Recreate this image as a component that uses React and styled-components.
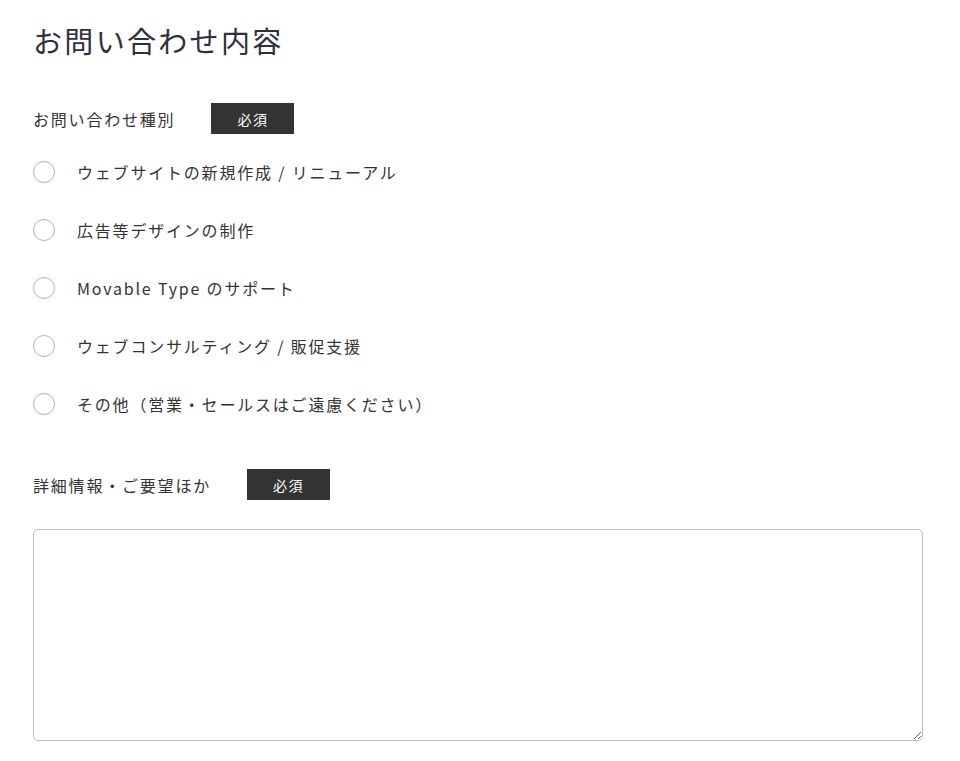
import React, { useState } from 'react';
import styled, { createGlobalStyle } from 'styled-components';

const options = [
  'ウェブサイトの新規作成 / リニューアル',
  '広告等デザインの制作',
  'Movable Type のサポート',
  'ウェブコンサルティング / 販促支援',
  'その他（営業・セールスはご遠慮ください）',
];

const App = () => {
  const [kind, setKind] = useState(null);

  return (
    <>
      <GlobalStyle />
      <Page>
        <Heading>お問い合わせ内容</Heading>

        <FieldLabel>
          <LabelText>お問い合わせ種別</LabelText>
          <Required>必須</Required>
        </FieldLabel>
        <RadioList>
          {options.map((opt) => (
            <RadioRow key={opt}>
              <Radio
                type="radio"
                name="kind"
                checked={kind === opt}
                onChange={() => setKind(opt)}
              />
              <span>{opt}</span>
            </RadioRow>
          ))}
        </RadioList>

        <FieldLabel $top={36}>
          <LabelText>詳細情報・ご要望ほか</LabelText>
          <Required>必須</Required>
        </FieldLabel>
        <Message />
      </Page>
    </>
  );
};

export default App;

const GlobalStyle = createGlobalStyle`
  body {
    margin: 0;
    background: #fff;
    font-family: "Noto Sans CJK JP", "Noto Sans", sans-serif;
    color: #333;
  }
`;

const Page = styled.div`
  padding: 19px 37px 0 33px;
  letter-spacing: 1.8px;
`;

const Heading = styled.h2`
  margin: 0;
  font-size: 29px;
  line-height: 42px;
  font-weight: 400;
  letter-spacing: 0.08em;
  color: #2d303d;
`;

const FieldLabel = styled.div`
  display: flex;
  align-items: center;
  margin-top: ${(p) => p.$top ?? 42}px;
  height: 31px;
`;

const LabelText = styled.span`
  font-size: 16px;
  color: #333;
`;

const Required = styled.span`
  display: flex;
  align-items: center;
  justify-content: center;
  width: 83px;
  height: 31px;
  margin-left: 36px;
  background: #333;
  color: #fff;
  font-size: 14px;
  letter-spacing: 0.1em;
`;

const RadioList = styled.div`
  display: flex;
  flex-direction: column;
  margin-top: 9px;
`;

const RadioRow = styled.label`
  display: flex;
  align-items: center;
  height: 58px;
  gap: 22px;
  font-size: 16px;
  color: #333;
  cursor: pointer;
`;

const Radio = styled.input`
  appearance: none;
  margin: 0;
  width: 22px;
  height: 22px;
  border: 1px solid #b3b3b3;
  border-radius: 50%;
  background: #fff;
  flex-shrink: 0;

  &:checked {
    box-shadow: inset 0 0 0 5px #fff;
    background: #333;
  }
`;

const Message = styled.textarea`
  display: block;
  box-sizing: border-box;
  width: 100%;
  height: 212px;
  margin-top: 29px;
  border: 1px solid #bdbdbd;
  border-radius: 5px;
  font-family: inherit;
  font-size: 16px;
  padding: 10px;
`;
